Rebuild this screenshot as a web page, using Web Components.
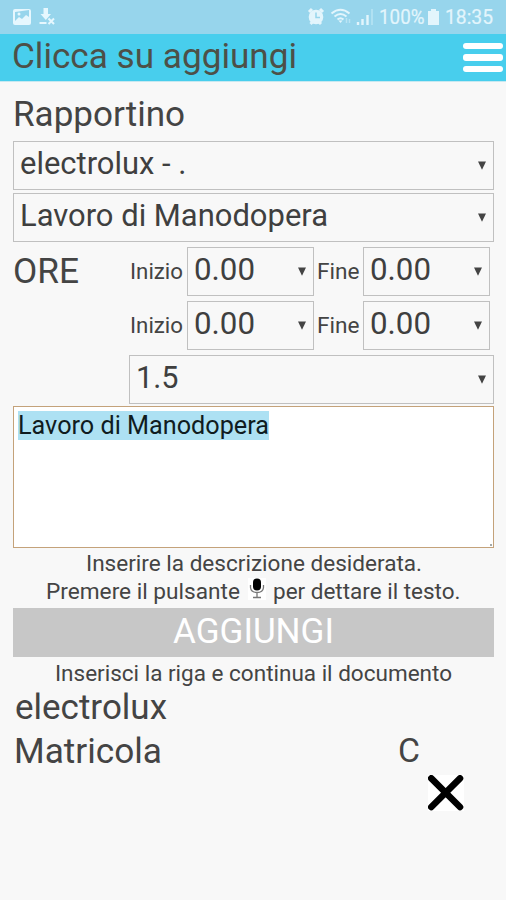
<!DOCTYPE html>
<html lang="it">
<head>
<meta charset="utf-8">
<title>Rapportino</title>
<style>
html,body{margin:0;background:#f8f8f8;font-family:Roboto,"Liberation Sans",sans-serif;color:#444}
</style>
</head>
<body>
<report-app></report-app>
<script>
const define=(name,html,setup)=>customElements.define(name,class extends HTMLElement{
  connectedCallback(){
    if(this.shadowRoot)return;
    const t=document.createElement('template');
    t.innerHTML=html;
    this.attachShadow({mode:'open'}).append(t.content.cloneNode(true));
    if(setup)setup(this,this.shadowRoot);
  }
});

/* Single line of text, stretched so that it fills the given measure. */
define('fit-text',`<style>
:host{display:block;flex:none;white-space:nowrap;line-height:1.172}
span{display:inline-block;transform-origin:0 50%}
</style><span><slot></slot></span>`,(el,root)=>{
  el.style.fontSize=el.getAttribute('size')+'px';
  const w=+el.getAttribute('measure');
  if(w){
    const s=root.querySelector('span');
    s.style.transform='scaleX('+w/s.getBoundingClientRect().width+')';
    el.style.width=w+'px';
  }
});

define('status-bar',`<style>
:host{display:flex;height:34px;box-sizing:border-box;background:#97d5ec;color:#e3f5fc;align-items:center;padding:0 13px 0 12px}
svg{display:block;flex:none}
.gap{flex:1}
</style>
<svg width="44" height="20" viewBox="12 7 44 20">
 <path fill="#e6f7fe" fill-rule="evenodd" d="M15 9h14a2 2 0 0 1 2 2v12a2 2 0 0 1-2 2H15a2 2 0 0 1-2-2V11a2 2 0 0 1 2-2zm0 3v9l4-4 3 2 4-4 3 2v-7z"/>
 <circle cx="19" cy="14" r="1.5" fill="#e6f7fe"/>
 <path fill="#e6f7fe" d="M43.500 8h4.500v6h3l-5.200 6-5.300-6h3zM39.500 22h7v2h-7z"/>
 <path stroke="#e6f7fe" stroke-width="2" d="M48.500 18.500l5.500 5.500m0-5.500l-5.500 5.500"/>
</svg>
<div class="gap"></div>
<svg width="72" height="20" viewBox="307 7 72 20" fill="none" stroke="#e3f5fc">
 <circle cx="316" cy="17" r="7.300" fill="#e3f5fc" stroke="none"/>
 <path stroke-width="3" d="M309 12l3-3m8 0l3 3M310.500 24l2-2m8.500 2l-2-2"/>
 <path stroke="#97d5ec" stroke-width="1.500" d="M316 12.500v5h4"/>
 <path stroke-width="2" d="M331.500 13.500q9-7.500 18 0M334.500 16.500q6-5 12 0M337.500 19.500q3-2.500 6 0"/>
 <path fill="#e3f5fc" stroke="none" d="M338.500 20.500h4l-2 2.500z"/>
 <path stroke="#b9e4f4" stroke-width="1.500" d="M346.500 18v5m3-4v4"/>
 <path stroke-width="2.400" d="M358 22v3M362.500 19v6M367.500 15v10"/>
 <path stroke="#b9e4f4" stroke-width="1.500" d="M372 9v16"/>
</svg>
<fit-text size="21" measure="45.5" style="-webkit-text-stroke:.2px">100%</fit-text>
<svg width="13" height="18" viewBox="0 0 13 18" style="margin:0 5px 0 3px"><path fill="#e3f5fc" d="M4 1h5v2h3v14H1V3h3z"/></svg>
<fit-text size="21" measure="48" style="-webkit-text-stroke:.2px">18:35</fit-text>`);

define('app-header',`<style>
:host{display:flex;height:48px;box-sizing:border-box;background:#48ceed;color:#4d5048;border-bottom:1px solid #c7e9f1;align-items:center;justify-content:space-between;padding:0 3px 0 12px}
.t{padding-bottom:2px}
.menu{display:flex;flex-direction:column;gap:5px}
i{display:block;width:40px;height:6.500px;border-radius:3px;background:#fff}
</style><div class="t"><slot></slot></div><div class="menu"><i></i><i></i><i></i></div>`);

define('select-box',`<style>
:host{display:flex;box-sizing:border-box;border:1px solid #c0c0c0;height:49px;align-items:center;justify-content:space-between;padding:0 7.500px 0 6px;color:#3f3f3f;flex:none}
.v{padding-bottom:var(--lift,2px)}
svg{display:block}
</style><div class="v"><slot></slot></div><svg width="8" height="9" viewBox="0 0 8 9"><path fill="#444" d="M0 .5h8L4 8.800z"/></svg>`);

define('time-row',`<style>
:host{display:flex;height:49px;align-items:center}
.lead{width:117px;flex:none}
.a{width:57px;flex:none;padding-top:1px}
.b{width:49px;flex:none;padding-top:1px;box-sizing:border-box;padding-left:3px}
select-box{width:127px}
</style><div class="lead"><slot></slot></div>
<div class="a"><fit-text size="22" measure="53">Inizio</fit-text></div>
<select-box><fit-text size="31.500" measure="61">0.00</fit-text></select-box>
<div class="b"><fit-text size="22" measure="42.500">Fine</fit-text></div>
<select-box><fit-text size="31.500" measure="61">0.00</fit-text></select-box>`);

define('note-area',`<style>
:host{display:flex;flex-direction:column;justify-content:space-between;box-sizing:border-box;height:142px;border:1px solid #c4a27a;background:#fff;color:#101c20;padding:4px}
mark{display:flex;width:251px;height:29px;background:#ade1f3;color:inherit;align-items:center}
i{align-self:flex-end;width:2px;height:2px;background:#a5aaa9;margin:0 -3px -3px 0}
</style><mark><slot></slot></mark><i></i>`);

define('action-button',`<style>
:host{display:flex;box-sizing:border-box;height:49px;background:#c7c7c7;color:#fff;align-items:center;justify-content:center;padding-bottom:2px}
</style><slot></slot>`);

define('mic-icon',`<style>:host{display:block;flex:none}svg{display:block}</style>
<svg width="20" height="24" viewBox="0 0 20 24"><path fill="#fff" d="M1 1h18v22H1z"/><rect x="6" y="1.500" width="8" height="12" rx="4" fill="#000"/><path d="M3.500 8v2.500q.5 5 6.500 5t6.500-5V8M10 16v4M6 20.500h8" fill="none" stroke="#777" stroke-width="1.300"/></svg>`);

define('delete-icon',`<style>:host{display:block;flex:none}svg{display:block}</style>
<svg width="36" height="36" viewBox="0 0 36 36"><path fill="#fff" d="M0 0h36v36H0z"/><path d="M3.300 3.300l28.700 28.700m0-28.700l-28.700 28.700" stroke="#000" stroke-width="6.600" stroke-linecap="round"/></svg>`);

define('report-app',`<style>
:host{display:block;height:900px;overflow:hidden;background:#f8f8f8}
main{display:flex;flex-direction:column;padding:0 12px 0 13px}
.row{display:flex;align-items:center;box-sizing:border-box}
.c{justify-content:center}
.hours{display:flex;flex-direction:column;gap:5.500px;margin:4.500px 0}
</style>
<status-bar></status-bar>
<app-header><fit-text size="35" measure="285">Clicca su aggiungi</fit-text></app-header>
<main>
 <div class="row" style="height:59px;padding-top:5px"><fit-text size="34.500" measure="172">Rapportino</fit-text></div>
 <select-box style="margin-bottom:3px;--lift:2px"><fit-text size="31" measure="166.500">electrolux - .</fit-text></select-box>
 <select-box><fit-text size="31" measure="308">Lavoro di Manodopera</fit-text></select-box>
 <div class="hours">
  <time-row><fit-text size="34.500" measure="66">ORE</fit-text></time-row>
  <time-row></time-row>
 </div>
 <select-box style="margin-left:116px"><fit-text size="31" measure="42.500">1.5</fit-text></select-box>
 <note-area style="margin-top:2.500px"><fit-text size="25" measure="251">Lavoro di Manodopera</fit-text></note-area>
 <div class="row c" style="height:29px;padding-top:3px"><fit-text size="22" measure="336">Inserire la descrizione desiderata.</fit-text></div>
 <div class="row" style="height:31px;padding:0 0 1px 33px">
  <fit-text size="22" measure="194">Premere il pulsante</fit-text>
  <mic-icon style="margin:-6px 6px 0 7px"></mic-icon>
  <fit-text size="22" measure="187.500">per dettare il testo.</fit-text>
 </div>
 <action-button><fit-text size="35" measure="161">AGGIUNGI</fit-text></action-button>
 <div class="row c" style="height:33px"><fit-text size="22" measure="397">Inserisci la riga e continua il documento</fit-text></div>
 <div class="row" style="height:37px;padding-bottom:2px"><fit-text size="34.500" measure="152" style="margin-left:1.500px">electrolux</fit-text></div>
 <div class="row" style="height:48px"><fit-text size="34.500" measure="148" style="margin-left:1px">Matricola</fit-text><fit-text size="34" measure="22" style="margin-left:236px">C</fit-text></div>
 <div class="row" style="height:36px;padding-left:415px"><delete-icon></delete-icon></div>
</main>`);
</script>
</body>
</html>
